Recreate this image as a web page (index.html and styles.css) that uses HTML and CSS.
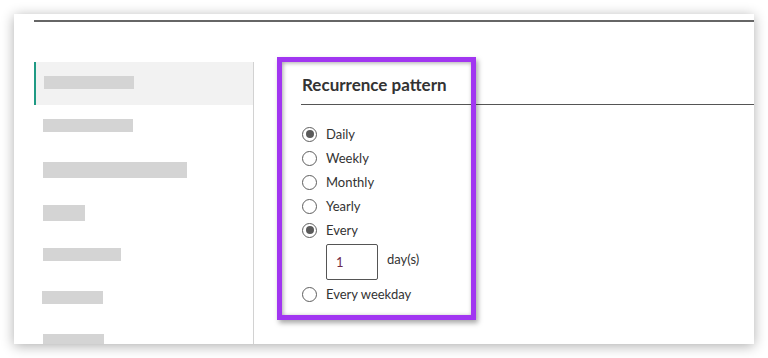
FILE: index.html
```html
<!DOCTYPE html>
<html lang="en">
<head>
  <meta charset="UTF-8" />
  <meta name="viewport" content="width=device-width,initial-scale=1" />
  <title>Recurrence pattern</title>
  <link rel="stylesheet" href="styles.css">
</head>
<body>
  <div id="panel">
    <div class="top-rule"></div>

    <div class="body-row">
      <div class="side-nav">
        <div class="nav-item active"><span class="bar w90"></span></div>
        <div class="nav-item"><span class="bar w90"></span></div>
        <div class="nav-item"><span class="bar w144 tall"></span></div>
        <div class="nav-item"><span class="bar w42 tall"></span></div>
        <div class="nav-item"><span class="bar w78"></span></div>
        <div class="nav-item"><span class="bar w61 shift"></span></div>
        <div class="nav-item"><span class="bar w61"></span></div>
      </div>

      <div class="main">
        <h2 class="section-title">Recurrence pattern</h2>
        <form class="pattern" onsubmit="return false;">
          <label class="opt"><input type="radio" name="rec" checked><span>Daily</span></label>
          <label class="opt"><input type="radio" name="rec"><span>Weekly</span></label>
          <label class="opt"><input type="radio" name="rec"><span>Monthly</span></label>
          <label class="opt"><input type="radio" name="rec"><span>Yearly</span></label>
          <label class="opt"><input type="radio" name="rec2" checked><span>Every</span></label>
          <div class="every-row">
            <input class="num" type="text" value="1">
            <span class="unit">day(s)</span>
          </div>
          <label class="opt"><input type="radio" name="rec2"><span>Every weekday</span></label>
        </form>
      </div>
    </div>

    <!-- highlight annotation -->
    <div class="highlight"></div>
  </div>
</body>
</html>
```

FILE: styles.css
```css
* {margin:0;padding:0;box-sizing:border-box;font-family:Lato, "Liberation Sans", sans-serif}
body {background:#fff;padding:14px}

#panel {
  position:relative;width:740px;height:330px;background:#fff;overflow:hidden;
  display:flex;flex-direction:column;
  box-shadow:0 2px 12px rgba(0,0,0,.32);
}
.top-rule {margin:6px 0 0 20px;height:2px;background:#666}

.body-row {flex:1;display:flex;margin-top:40px;min-height:0}

.side-nav {
  width:220px;margin-left:20px;border-right:1px solid #d2d2d2;flex-shrink:0;
}
.nav-item {height:43px;padding:14px 0 0 9px}
.nav-item.active {background:#f2f2f2;border-left:2px solid #1f9a84;padding-left:8px}
.bar {display:block;height:13px;background:#d4d4d4}
.bar.tall {height:16px}
.bar.shift {margin-left:-1px}
.w90 {width:90px}.w144 {width:144px}.w42 {width:42px}.w78 {width:78px}.w61 {width:61px}

.main {flex:1;padding-left:47px}
.section-title {
  font-size:17px;font-weight:700;color:#333;line-height:24px;
  padding:11px 0 7px 1px;border-bottom:1px solid #555;
}

.pattern {display:flex;flex-direction:column;margin-top:17px}
.opt {display:flex;align-items:center;height:24px;gap:9px;font-size:13px;color:#333;cursor:pointer}
.opt input {
  appearance:none;-webkit-appearance:none;width:15px;height:15px;margin-left:1px;
  border:1px solid #5e5e5e;border-radius:50%;background:#fff;display:grid;place-items:center;
}
.opt input::after {content:"";width:8px;height:8px;border-radius:50%;background:transparent}
.opt input:checked::after {background:#5a5a5a}

.every-row {display:flex;align-items:flex-start;gap:9px;margin:2px 0 2px 25px}
.num {
  width:52px;height:36px;border:1px solid #555;border-radius:2px;padding:0 0 0 9px;
  font-size:13px;color:#6e2a4a;outline:none;
}
.unit {font-size:13px;color:#333;line-height:24px;margin-top:3px}

.highlight {
  position:absolute;left:263px;top:43px;width:199px;height:263px;
  border:5px solid #a136f1;pointer-events:none;
  box-shadow:2px 3px 5px rgba(0,0,0,.35), inset 1px 1px 4px rgba(0,0,0,.35);
}
```
